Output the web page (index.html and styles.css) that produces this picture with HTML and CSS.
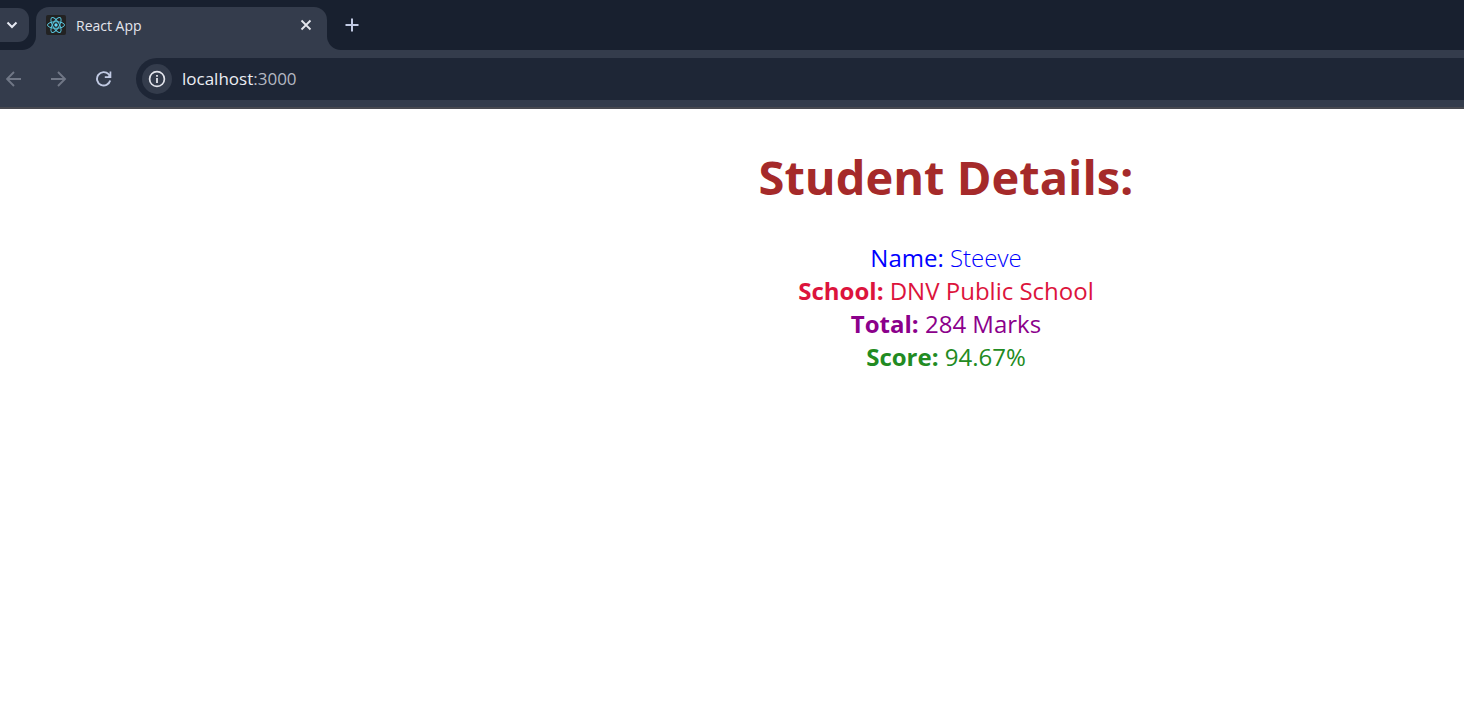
FILE: index.html
```html
<!DOCTYPE html>
<html lang="en">
<head>
<meta charset="utf-8">
<title>React App</title>
<link rel="stylesheet" href="styles.css">
</head>
<body>
<header class="browser">
  <div class="tabstrip">
    <div class="strip-start">
      <button class="tab-search" aria-label="Search tabs">
        <svg width="12" height="8" viewBox="0 0 12 8"><path d="M1.5 1.5 6 6l4.500-4.500" fill="none" stroke="currentColor" stroke-width="2"/></svg>
      </button>
    </div>
    <div class="tab-slot">
      <div class="tab">
        <svg class="favicon" width="20" height="20" viewBox="0 0 20 20">
          <rect width="20" height="20" rx="2" fill="#222"/>
          <g fill="none" stroke="#58c4dc" stroke-width="1">
            <ellipse cx="10" cy="10" rx="8.500" ry="3.300"/>
            <ellipse cx="10" cy="10" rx="8.500" ry="3.300" transform="rotate(60 10 10)"/>
            <ellipse cx="10" cy="10" rx="8.500" ry="3.300" transform="rotate(120 10 10)"/>
          </g>
          <circle cx="10" cy="10" r="1.700" fill="#61dafb"/>
        </svg>
        <span class="tab-title">React App</span>
        <button class="tab-close" aria-label="Close tab">
          <svg width="12" height="12" viewBox="0 0 12 12"><path d="m1.500 1.500 9 9m0-9-9 9" fill="none" stroke="currentColor" stroke-width="1.800"/></svg>
        </button>
      </div>
    </div>
    <div class="strip-end">
      <button class="new-tab" aria-label="New tab">
        <svg width="14" height="14" viewBox="0 0 14 14"><path d="M7 .5v13M.5 7h13" fill="none" stroke="currentColor" stroke-width="2"/></svg>
      </button>
    </div>
  </div>
  <div class="toolbar">
    <button class="nav dim" aria-label="Back">
      <svg width="16" height="16" viewBox="0 0 16 16"><path d="M15 8H1.500M8 1 1 8l7 7" fill="none" stroke="currentColor" stroke-width="1.900"/></svg>
    </button>
    <button class="nav dim" aria-label="Forward">
      <svg width="16" height="16" viewBox="0 0 16 16"><path d="M0 8H13.500M7 1l7 7-7 7" fill="none" stroke="currentColor" stroke-width="1.900"/></svg>
    </button>
    <button class="nav" aria-label="Reload">
      <svg width="16" height="16" viewBox="0 0 16 16"><path d="M14.200 9.500A6.700 6.700 0 1 1 12.600 3.200L14 5" fill="none" stroke="currentColor" stroke-width="1.900"/><path d="M15.300.5v6.500H8.800V5.200h3.200L13.600 3.600V.5z" fill="currentColor"/></svg>
    </button>
    <div class="address">
      <button class="site-info" aria-label="View site information">
        <svg width="18" height="18" viewBox="0 0 18 18"><circle cx="9" cy="9" r="7.400" fill="none" stroke="currentColor" stroke-width="1.700"/><path d="M8.100 8h1.800v5H8.100zM8.100 4.900h1.800v1.800H8.100z" fill="currentColor"/></svg>
      </button>
      <a class="url" href="http://localhost:3000">localhost<span class="port">:3000</span></a>
    </div>
  </div>
</header>
<main class="page">
  <h1 class="heading">Student Details:</h1>
  <div class="details">
    <div class="name"><b>Name:</b> <span>Steeve</span></div>
    <div class="school"><b>School:</b> <span>DNV Public School</span></div>
    <div class="total"><b>Total:</b> <span>284 Marks</span></div>
    <div class="score"><b>Score:</b> <span>94.67%</span></div>
  </div>
</main>
</body>
</html>
```
FILE: styles.css
```css
* { box-sizing: border-box; }
body { margin: 0; background: #fff; font-family: "Open Sans", "Noto Sans", sans-serif; }
button { display: flex; align-items: center; justify-content: center; flex: none; border: 0; padding: 0; background: none; color: #c1cae3; }
svg { display: block; flex: none; }

.browser { background: #343c4c; border-bottom: 2px solid #484950; }
.tabstrip { display: flex; height: 50px; }
.strip-start { flex: none; width: 36px; padding-top: 8px; background: #18202f; border-radius: 0 0 14px 0; }
.tab-search { width: 29px; height: 34px; padding-right: 5px; border-radius: 0 11px 11px 0; background: #343c4c; color: #e6e9f2; }
.tab-slot { flex: none; width: 291px; padding-top: 7px; background: linear-gradient(#18202f 25px, #343c4c 25px); }
.tab { display: flex; align-items: center; height: 43px; padding: 0 12px 7px 10px; border-radius: 13px 13px 0 0; background: #343c4c; }
.tab-title { flex: 1; margin-left: 10px; padding-top: 2px; color: #e3e5ec; font-size: 14px; line-height: 20px; }
.tab-close { width: 18px; height: 18px; color: #e3e5ec; }
.strip-end { flex: 1; padding: 13px 0 0 13px; background: #18202f; border-radius: 0 0 0 14px; }
.new-tab { width: 24px; height: 24px; }

.toolbar { display: flex; align-items: center; height: 57px; padding: 8px 0 7px 6px; }
.nav { width: 16px; height: 16px; margin-right: 29px; }
.nav.dim { color: #707786; }
.address { display: flex; align-items: center; flex: 1; height: 42px; margin-left: -5px; padding-left: 6px; border-radius: 21px 0 0 21px; background: #1e2636; }
.site-info { width: 30px; height: 30px; border-radius: 50%; background: #343c4c; color: #e3e5ec; }
.url { margin-left: 10px; color: #eceef4; font-size: 17px; line-height: 24px; text-decoration: none; }
.port { color: #b4b8c2; }

.page { padding: 35px 0 32px 428px; text-align: center; }
.heading { margin: 0 0 31px; color: brown; font-size: 47px; line-height: 66px; font-weight: 700; }
.details { font-size: 24px; line-height: 33px; }
.details span { font-weight: 400; }
.name { color: blue; }
.name b { font-weight: 400; }
.details .name span { font-weight: 300; }
.school { color: crimson; }
.total { color: darkmagenta; }
.score { color: forestgreen; }
```
